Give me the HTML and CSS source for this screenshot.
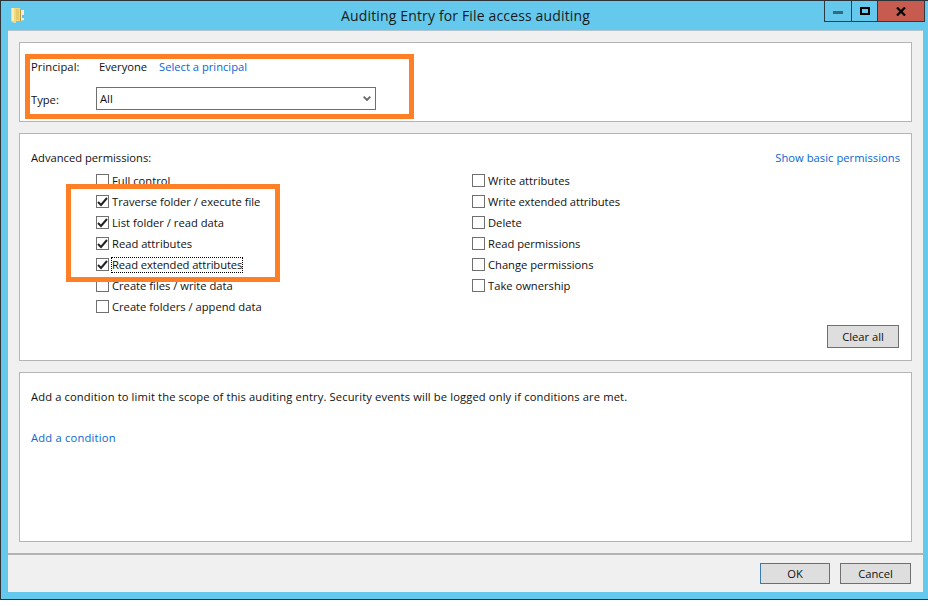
FILE: index.html
```html
<!DOCTYPE html>
<html lang="en">
<head>
<meta charset="utf-8">
<title>Auditing Entry for File access auditing</title>
<link rel="stylesheet" href="styles.css">
</head>
<body>
<div class="window">
  <header class="titlebar">
    <svg class="app-icon" width="13" height="16" viewBox="0 0 13 16">
      <path d="M0 1h9v13H5v2H3l-3-2z" fill="#eeda84"/>
      <path d="M1 1h2v13H1z" fill="#f8eeb4"/>
      <path d="M5 2h3v11H5z" fill="#e6c968"/>
      <path d="M9 3h4v10l-4 1z" fill="#f4efd8"/>
      <path d="M9 3h1v11H9z" fill="#b89a3c"/>
      <path d="M11 8h2v3h-2z" fill="#6fb7e4"/>
    </svg>
    <h1 class="title">Auditing Entry for File access auditing</h1>
    <div class="controls">
      <div class="ctl ctl-min"><span class="min-bar"></span></div>
      <div class="ctl ctl-max"><span class="max-box"></span></div>
      <div class="ctl ctl-close">
        <svg width="10" height="9" viewBox="0 0 10 9"><path d="M1 0.5l8 8M9 0.5l-8 8" stroke="#000" stroke-width="2.2" fill="none"/></svg>
      </div>
    </div>
  </header>
  <main class="client">
    <div class="content">
      <section class="panel panel-principal">
        <div class="row row-principal">
          <span class="label">Principal:</span>
          <span class="principal">Everyone</span>
          <a class="link">Select a principal</a>
        </div>
        <div class="row row-type">
          <span class="label">Type:</span>
          <div class="select">
            <span>All</span>
            <svg width="8" height="5" viewBox="0 0 8 5"><path d="M0.7 0.7l3.3 3.3 3.3-3.3" stroke="#666" stroke-width="1.8" fill="none"/></svg>
          </div>
        </div>
      </section>
      <section class="panel panel-perms">
        <div class="perms-head">
          <span>Advanced permissions:</span>
          <a class="link link-basic">Show basic permissions</a>
        </div>
        <div class="perms-grid">
          <ul class="col col-left">
            <li class="check"><i class="box"></i>Full control</li>
            <li class="check"><i class="box"><svg width="11" height="10" viewBox="0 0 11 10"><path d="M1 5l3 3 6-7" stroke="#222" stroke-width="2" fill="none"/></svg></i>Traverse folder / execute file</li>
            <li class="check"><i class="box"><svg width="11" height="10" viewBox="0 0 11 10"><path d="M1 5l3 3 6-7" stroke="#222" stroke-width="2" fill="none"/></svg></i>List folder / read data</li>
            <li class="check"><i class="box"><svg width="11" height="10" viewBox="0 0 11 10"><path d="M1 5l3 3 6-7" stroke="#222" stroke-width="2" fill="none"/></svg></i>Read attributes</li>
            <li class="check"><i class="box"><svg width="11" height="10" viewBox="0 0 11 10"><path d="M1 5l3 3 6-7" stroke="#222" stroke-width="2" fill="none"/></svg></i><span class="focused">Read extended attributes</span></li>
            <li class="check"><i class="box"></i>Create files / write data</li>
            <li class="check"><i class="box"></i>Create folders / append data</li>
          </ul>
          <ul class="col col-right">
            <li class="check"><i class="box"></i>Write attributes</li>
            <li class="check"><i class="box"></i><span class="tight">Write extended attributes</span></li>
            <li class="check"><i class="box"></i>Delete</li>
            <li class="check"><i class="box"></i>Read permissions</li>
            <li class="check"><i class="box"></i>Change permissions</li>
            <li class="check"><i class="box"></i>Take ownership</li>
          </ul>
        </div>
        <div class="clear-row"><button class="btn btn-clear">Clear all</button></div>
      </section>
      <section class="panel panel-cond">
        <p class="cond-text">Add a condition to limit the scope of this auditing entry. Security events will be logged only if conditions are met.</p>
        <a class="link link-cond">Add a condition</a>
      </section>
    </div>
    <footer class="footer">
      <button class="btn btn-ok">OK</button>
      <button class="btn btn-cancel">Cancel</button>
    </footer>
  </main>
  <div class="note note-principal"></div>
  <div class="note note-perms"></div>
</div>
</body>
</html>
```
FILE: styles.css
```css
* { box-sizing: border-box; }
html, body { margin: 0; padding: 0; background: #fff; }
body {
  font-family: "Open Sans", "Noto Sans", sans-serif;
  font-size: 11.2px;
  color: #111;
  height: 606px;
  overflow: hidden;
}
.window {
  position: relative;
  height: 600px;
  background: #64c9ec;
  border-top: 1px solid #2b3338;
  border-left: 1px solid #2b3338;
  border-bottom: 1px solid #2b3338;
  padding-left: 7px;
  padding-right: 5px;
  display: flex;
  flex-direction: column;
}
.titlebar {
  height: 29px;
  flex: none;
  margin-left: -7px;
  margin-right: -5px;
  display: flex;
  align-items: flex-start;
  position: relative;
}
.app-icon { margin: 6px 0 0 10px; flex: none; }
.title {
  position: absolute;
  left: 2px;
  right: 0;
  top: 5px;
  margin: 0;
  text-align: center;
  font-weight: 400;
  font-size: 14px;
  letter-spacing: 0.15px;
  line-height: 19px;
  color: #1a1a1a;
}
.controls {
  position: absolute;
  right: 3px;
  top: 0;
  display: flex;
  height: 21px;
  border: 1px solid #2e3a40;
  border-top: 0;
}
.ctl { display: flex; align-items: center; justify-content: center; }
.ctl-min { width: 27px; border-right: 1px solid #2e3a40; }
.ctl-max { width: 26px; border-right: 1px solid #2e3a40; }
.ctl-close { width: 46px; background: #c75b50; }
.min-bar { width: 10px; height: 3px; background: #2f6b82; margin-top: 3px; }
.max-box { width: 10px; height: 8px; border: 2px solid #000; }
.client {
  flex: 1;
  background: #f0f0f0;
  margin-bottom: 7px;
  border-top: 1px solid #b4c4cc;
  display: flex;
  flex-direction: column;
}
.content {
  flex: 1;
  padding: 11px;
  display: flex;
  flex-direction: column;
  gap: 11px;
}
.panel {
  background: #fff;
  border: 1px solid #b5b5b5;
  flex: none;
}
.panel-principal { height: 80px; padding: 11px 0 0 11px; }
.panel-perms { height: 228px; padding: 15px 11px 0 11px; }
.panel-cond { height: 170px; padding: 15px 11px 0 11px; }
.row { display: flex; align-items: center; }
.label { width: 65px; flex: none; }
.row-principal { height: 24px; }
.row-principal .label { letter-spacing: 0.05px; }
.principal { width: 60px; margin-left: 3px; flex: none; }
.row-type { margin-top: 9px; height: 23px; }
.row-type .label { padding-top: 2px; }
.select {
  width: 280px;
  height: 23px;
  border: 1px solid #6e6e6e;
  background: #fff;
  display: flex;
  align-items: center;
  justify-content: space-between;
  padding: 0 4px 0 3px;
}
.link { color: #0a66d6; }
.link-basic { letter-spacing: 0.03px; }
.link-cond { letter-spacing: 0.2px; line-height: 18px; }
.perms-head { display: flex; justify-content: space-between; line-height: 18px; height: 18px; }
.perms-grid { display: flex; margin-top: 3px; padding-left: 65px; }
.col { list-style: none; margin: 0; padding: 0; }
.col-left { width: 376px; }
.check { display: flex; align-items: center; height: 21px; }
.box {
  width: 13px;
  height: 13px;
  border: 1px solid #707070;
  background: #fff;
  margin-right: 3px;
  flex: none;
  display: flex;
  align-items: center;
  justify-content: center;
}
.tight { letter-spacing: -0.08px; }
.focused { outline: 1px dotted #000; line-height: 14px; letter-spacing: -0.08px; }
.clear-row { display: flex; justify-content: flex-end; margin-top: 8px; }
.btn {
  font: inherit;
  color: #111;
  background: #dedede;
  border: 1px solid #707070;
  padding: 0;
}
.btn-clear { width: 72px; height: 23px; margin-right: 1px; }
.cond-text { margin: 0 0 23px; line-height: 18px; letter-spacing: 0.12px; }
.footer {
  flex: none;
  height: 39px;
  border-top: 2px solid #b3b3b3;
  display: flex;
  justify-content: flex-end;
  align-items: flex-start;
  gap: 10px;
  padding: 8px 12px 0 0;
}
.btn-ok { width: 70px; height: 21px; border-color: #3b7cab; }
.btn-cancel { width: 71px; height: 21px; }
.note { position: absolute; border: 5px solid #ff7f27; }
.note-principal { left: 24px; top: 53px; width: 389px; height: 65px; }
.note-perms { left: 65px; top: 183px; width: 214px; height: 98px; }
```
